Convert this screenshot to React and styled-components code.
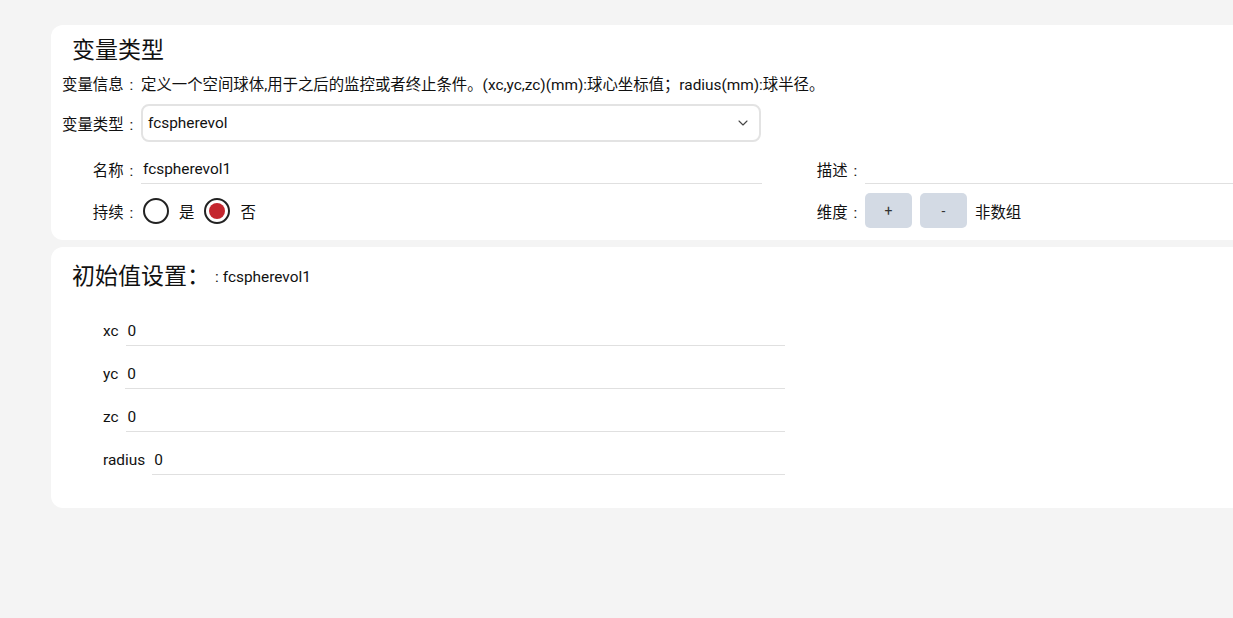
import React from 'react';
import styled, { createGlobalStyle } from 'styled-components';
import { ChevronDown } from 'lucide-react';

const GlobalStyle = createGlobalStyle`
  html, body {
    margin: 0;
    padding: 0;
    background: #f4f4f4;
    overflow: hidden;
  }
  body {
    font-family: Roboto, "Noto Sans CJK SC", sans-serif;
    color: #111;
    font-size: 15.4px;
  }
`

const Page = styled.div`
  padding: 25px 0 0 51px;
  display: flex;
  flex-direction: column;
  gap: 7px;
  width: 1600px;
`

const Card = styled.section`
  background: #fff;
  border-radius: 12px;
  padding: ${p => p.$pad};
  display: flex;
  flex-direction: column;
`

const Title = styled.h2`
  margin: 0 0 0 10px;
  font-size: 23px;
  font-weight: 400;
  line-height: 30px;
  display: flex;
  align-items: center;
`

const TitleSub = styled.span`
  font-size: 15.4px;
  margin-left: 5px;

  &::before {
    content: ':';
    margin-right: 4px;
  }
`

const Line = styled.div`
  display: flex;
  align-items: center;
  gap: 2px;
  margin-top: ${p => p.$mt || 0}px;
  height: ${p => p.$h}px;
`

const Label = styled.span`
  flex: none;
  width: 77px;
  text-align: right;
  white-space: nowrap;

  &::after {
    content: ':';
    display: inline-block;
    width: 1em;
    text-align: center;
  }
`

const Select = styled.div`
  width: 620px;
  height: 38px;
  box-sizing: border-box;
  border: 2px solid #e3e3e3;
  border-radius: 8px;
  display: flex;
  align-items: center;
  justify-content: space-between;
  padding: 0 8px 0 5px;
`

const Grid = styled.div`
  display: grid;
  grid-template-columns: 700px 700px;
  column-gap: 24px;
  row-gap: 9px;
  margin-top: 12px;
`

const Field = styled.div`
  display: flex;
  align-items: center;
  gap: ${p => p.$gap ?? 2}px;
  height: ${p => p.$h}px;
`

const Input = styled.div`
  flex: 1;
  height: 29px;
  box-sizing: border-box;
  border-bottom: 1px solid #e0e0e0;
  display: flex;
  align-items: center;
  padding-left: 2px;
`

const Radio = styled.span`
  width: 26px;
  height: 26px;
  box-sizing: border-box;
  border: 2px solid #222;
  border-radius: 50%;
  display: flex;
  align-items: center;
  justify-content: center;
  flex: none;
  margin: 0 10px 0 ${p => p.$ml || 0}px;

  &::after {
    content: '';
    width: 16px;
    height: 16px;
    border-radius: 50%;
    background: ${p => (p.$checked ? '#c4262e' : 'transparent')};
  }
`

const RadioText = styled.span`
  margin-right: 10px;
`

const DimButton = styled.button`
  width: 47px;
  height: 35px;
  border: none;
  border-radius: 5px;
  background: #d3dae4;
  color: #333;
  font-family: inherit;
  font-size: 14px;
  padding: 0;
  margin-right: 6px;
`

const Rows = styled.div`
  margin: 24px 0 0 41px;
  width: 682px;
  display: flex;
  flex-direction: column;
  gap: 13px;
`

const ValueRow = styled.div`
  display: flex;
  align-items: center;
  gap: 7px;
  height: 30px;
`

const ValueInput = styled(Input)`
  height: 30px;
`

const values = ['xc', 'yc', 'zc', 'radius'];

export default function App() {
  return (
    <>
      <GlobalStyle />
      <Page>
        <Card $pad="11px 0 12px 11px">
          <Title>变量类型</Title>
          <Line $mt={6} $h={22}>
            <Label>变量信息</Label>
            <span>定义一个空间球体,用于之后的监控或者终止条件。(xc,yc,zc)(mm):球心坐标值；radius(mm):球半径。</span>
          </Line>
          <Line $mt={10} $h={38}>
            <Label>变量类型</Label>
            <Select>
              fcspherevol
              <ChevronDown size={16} strokeWidth={1.6} color="#444" />
            </Select>
          </Line>
          <Grid>
            <Field $h={30}>
              <Label>名称</Label>
              <Input>fcspherevol1</Input>
            </Field>
            <Field $h={30}>
              <Label>描述</Label>
              <Input />
            </Field>
            <Field $h={35} $gap={0}>
              <Label>持续</Label>
              <Radio $ml={4} />
              <RadioText>是</RadioText>
              <Radio $checked />
              <RadioText>否</RadioText>
            </Field>
            <Field $h={35}>
              <Label>维度</Label>
              <DimButton>+</DimButton>
              <DimButton>-</DimButton>
              <span>非数组</span>
            </Field>
          </Grid>
        </Card>
        <Card $pad="15px 0 33px 11px">
          <Title>
            初始值设置：<TitleSub>fcspherevol1</TitleSub>
          </Title>
          <Rows>
            {values.map(v => (
              <ValueRow key={v}>
                <span>{v}</span>
                <ValueInput>0</ValueInput>
              </ValueRow>
            ))}
          </Rows>
        </Card>
      </Page>
    </>
  );
}
